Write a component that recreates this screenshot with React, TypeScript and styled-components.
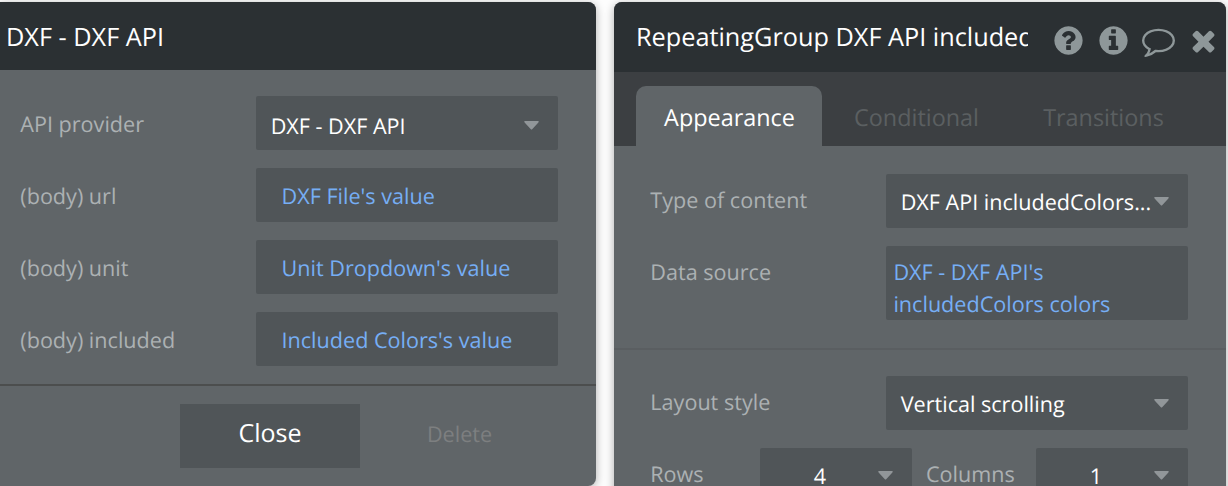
import React from "react";
import styled, { createGlobalStyle } from "styled-components";

const GlobalStyle = createGlobalStyle`
  * { box-sizing: border-box; }
  html, body { margin: 0; background: #fdfdfd; }
  body {
    width: 1228px;
    height: 486px;
    overflow: hidden;
    font-family: "Open Sans", sans-serif;
    text-rendering: geometricPrecision;
  }
  button { text-rendering: inherit; }
`;

const Page = styled.main`
  display: flex;
  gap: 18px;
  width: 1228px;
  height: 486px;
  padding-top: 2px;
  overflow: hidden;
`;

const Panel = styled.section<{ $width: number; $height: number; $radius: string }>`
  flex: none;
  width: ${(p) => p.$width}px;
  height: ${(p) => p.$height}px;
  border-radius: ${(p) => p.$radius};
  background: #606568;
  box-shadow: 0 2px 10px rgba(0, 0, 0, 0.32);
  overflow: hidden;
`;

const TitleBar = styled.header<{ $height: number; $padding: string }>`
  display: flex;
  align-items: center;
  height: ${(p) => p.$height}px;
  padding: ${(p) => p.$padding};
  background: #2b3033;
`;

const Title = styled.h1<{ $width?: number }>`
  margin: 0;
  width: ${(p) => (p.$width ? `${p.$width}px` : "auto")};
  overflow: hidden;
  white-space: nowrap;
  color: #fff;
  font-size: 25.27px;
  font-weight: 400;
  line-height: 34px;
`;

const Actions = styled.div`
  display: flex;
  margin-left: 24px;
  padding-top: 6px;
  gap: 12px;
`;

const Glyph = styled.svg`
  display: block;
  width: 33px;
  height: 33px;
  fill: #8e9799;
`;

const Tabs = styled.nav`
  display: flex;
  align-items: flex-end;
  height: 74px;
  padding-left: 22px;
  background: #3c3f42;
`;

const Tab = styled.div<{ $width: number; $active?: boolean }>`
  width: ${(p) => p.$width}px;
  height: 60px;
  padding-left: 1px;
  border-radius: 10px 10px 0 0;
  background: ${(p) => (p.$active ? "#606568" : "transparent")};
  color: ${(p) => (p.$active ? "#fff" : "#5b5f61")};
  font-size: 23.4px;
  line-height: 62px;
  text-align: center;
`;

const Fields = styled.div<{ $padding: string }>`
  display: flex;
  flex-direction: column;
  gap: 18px;
  padding: ${(p) => p.$padding};
`;

const Row = styled.div`
  display: flex;
`;

const Label = styled.label<{ $width: number; $indent?: number; $raised?: boolean }>`
  flex: none;
  width: ${(p) => p.$width}px;
  height: 54px;
  padding-left: ${(p) => p.$indent ?? 0.3}px;
  color: #acb1b3;
  font-size: 21.6px;
  line-height: ${(p) => (p.$raised ? 54 : 58)}px;
  white-space: nowrap;
`;

const Box = styled.div<{ $width?: number }>`
  display: flex;
  align-items: center;
  flex: none;
  width: ${(p) => p.$width ?? 302}px;
  height: 54px;
  border-radius: 2px;
  background: #505558;
`;

const SelectBox = styled(Box)<{ $raised?: boolean }>`
  padding: ${(p) => (p.$raised ? 2 : 6)}px 19px 0 14.7px;
  color: #fff;
  font-size: 21.58px;
  white-space: nowrap;
`;

const SelectText = styled.span<{ $center?: boolean }>`
  flex: 1;
  min-width: 0;
  line-height: 30px;
  padding: 2px ${(p) => (p.$center ? 13 : 0)}px 0 0;
  text-align: ${(p) => (p.$center ? "center" : "left")};
`;

const Arrow = styled.svg`
  flex: none;
  display: block;
  width: 15px;
  height: 9px;
  margin-bottom: 1px;
  fill: #919699;
`;

const Expression = styled(Box)<{ $tall?: boolean }>`
  height: ${(p) => (p.$tall ? 74 : 54)}px;
  padding: ${(p) => (p.$tall ? "12px 7.4px 0" : "3px 25.5px 0")};
  color: #76aef5;
  font-size: 21.6px;
  line-height: 32px;
`;

const Divider = styled.hr<{ $color: string }>`
  height: 2px;
  margin: 0;
  border: 0;
  background: ${(p) => p.$color};
`;

const Footer = styled.footer`
  display: flex;
  padding: 18px 0 0 180px;
`;

const CloseButton = styled.button`
  width: 180px;
  height: 64px;
  padding: 0 0 7px;
  border: 0;
  background: #505558;
  color: #fff;
  font: 25px "Open Sans", sans-serif;
`;

const DeleteButton = styled.button`
  width: 199px;
  height: 64px;
  padding: 0 0 3px;
  border: 0;
  background: none;
  color: #7d7f80;
  font: 21.6px "Open Sans", sans-serif;
`;

const ICONS = {
  help:
    "M1024 1376v-192q0-14-9-23t-23-9h-192q-14 0-23 9t-9 23v192q0 14 9 23t23 9h192q14 0 23-9t9-23zm256-672q0-88-55.5-163t-138.5-116-170-41q-243 0-371 213-15 24 8 42l132 100q7 6 19 6 16 0 25-12 53-68 86-92 34-24 86-24 48 0 85.5 26t37.5 59q0 38-20 61t-68 45q-63 28-115.5 86.5t-52.5 125.5v36q0 14 9 23t23 9h192q14 0 23-9t9-23q0-19 21.5-49.5t54.5-49.5q32-18 49-28.5t46-35 44.5-48 28-60.5 12.5-81zm384 192q0 209-103 385.5t-279.5 279.5-385.5 103-385.5-103-279.5-279.5-103-385.5 103-385.5 279.5-279.5 385.5-103 385.5 103 279.5 279.5 103 385.5z",
  info:
    "M1152 1376v-160q0-14-9-23t-23-9h-96v-512q0-14-9-23t-23-9h-320q-14 0-23 9t-9 23v160q0 14 9 23t23 9h96v320h-96q-14 0-23 9t-9 23v160q0 14 9 23t23 9h448q14 0 23-9t9-23zm-128-896v-160q0-14-9-23t-23-9h-192q-14 0-23 9t-9 23v160q0 14 9 23t23 9h192q14 0 23-9t9-23zm640 416q0 209-103 385.5t-279.5 279.5-385.5 103-385.5-103-279.5-279.5-103-385.5 103-385.5 279.5-279.5 385.5-103 385.5 103 279.5 279.5 103 385.5z",
  comment:
    "M896 384q-204 0-381.5 69.5t-282 187.5-104.5 255q0 112 71.5 213.5t201.5 175.5l87 50-27 96q-24 91-70 172 152-63 275-171l43-38 57 6q69 8 130 8 204 0 381.5-69.5t282-187.5 104.5-255-104.5-255-282-187.5-381.5-69.5zm896 512q0 174-120 321.5t-326 233-450 85.5q-70 0-145-8-198 175-460 242-49 14-114 22h-5q-15 0-27-10.5t-16-27.5v-1q-3-4-.5-12t2-10 4.5-9.5l6-9 7-8.5 8-9q7-8 31-34.5t34.5-38 31-39.5 32.5-51 27-59 26-76q-157-89-247.5-220t-90.5-281q0-174 120-321.5t326-233 450-85.5 450 85.5 326 233 120 321.5z",
  close:
    "M1490 1322q0 40-28 68l-136 136q-28 28-68 28t-68-28l-294-294-294 294q-28 28-68 28t-68-28l-136-136q-28-28-28-68t28-68l294-294-294-294q-28-28-28-68t28-68l136-136q28-28 68-28t68 28l294 294 294-294q28-28 68-28t68 28l136 136q28 28 28 68t-28 68l-294 294 294 294q28 28 28 68z",
};

function Icon({ name }: { name: keyof typeof ICONS }) {
  return (
    <Glyph viewBox="0 0 1792 1792" aria-hidden="true">
      <path d={ICONS[name]} />
    </Glyph>
  );
}

type SelectProps = { text: string; width?: number; center?: boolean; raised?: boolean };

function Select({ text, width, center, raised }: SelectProps) {
  return (
    <SelectBox $width={width} $raised={raised}>
      <SelectText $center={center}>{text}</SelectText>
      <Arrow viewBox="0 0 15 9">
        <path d="M1 0H14Q15.4 .3 14.4 1.4L8.4 8Q7.5 9 6.6 8L.6 1.4Q-.4 .3 1 0Z" />
      </Arrow>
    </SelectBox>
  );
}

const bodyFields = [
  { label: "(body) url", value: "DXF File's value" },
  { label: "(body) unit", value: "Unit Dropdown's value" },
  { label: "(body) included", value: "Included Colors's value" },
];

export default function App() {
  return (
    <>
      <GlobalStyle />
      <Page>
        <Panel $width={596} $height={484} $radius="0 8px 8px 0">
          <TitleBar $height={68} $padding="2px 0 0 6px">
            <Title>DXF - DXF API</Title>
          </TitleBar>
          <Fields $padding="26px 0 18px 20px">
            <Row>
              <Label $width={236}>API provider</Label>
              <Select text="DXF - DXF API" />
            </Row>
            {bodyFields.map((f) => (
              <Row key={f.label}>
                <Label $width={236}>{f.label}</Label>
                <Expression>{f.value}</Expression>
              </Row>
            ))}
          </Fields>
          <Divider $color="#4c4e4e" />
          <Footer>
            <CloseButton>Close</CloseButton>
            <DeleteButton>Delete</DeleteButton>
          </Footer>
        </Panel>
        <Panel $width={612} $height={560} $radius="8px">
          <TitleBar $height={70} $padding="0 0 0 22px">
            <Title $width={392}>RepeatingGroup DXF API includedColors</Title>
            <Actions>
              <Icon name="help" />
              <Icon name="info" />
              <Icon name="comment" />
              <Icon name="close" />
            </Actions>
          </TitleBar>
          <Tabs>
            <Tab $width={186} $active>Appearance</Tab>
            <Tab $width={188}>Conditional</Tab>
            <Tab $width={186}>Transitions</Tab>
          </Tabs>
          <Fields $padding="28px 0 28px 36px">
            <Row>
              <Label $width={236} $raised>Type of content</Label>
              <Select text="DXF API includedColors..." raised />
            </Row>
            <Row>
              <Label $width={236} $raised>Data source</Label>
              <Expression $tall>
                DXF - DXF API's
                <br />
                includedColors colors
              </Expression>
            </Row>
          </Fields>
          <Divider $color="#5a5e61" />
          <Fields $padding="26px 0 0 36px">
            <Row>
              <Label $width={236} $raised>Layout style</Label>
              <Select text="Vertical scrolling" raised />
            </Row>
            <Row>
              <Label $width={110} $raised>Rows</Label>
              <Select text="4" width={152} center raised />
              <Label $width={124} $indent={14} $raised>Columns</Label>
              <Select text="1" width={152} center raised />
            </Row>
          </Fields>
        </Panel>
      </Page>
    </>
  );
}
